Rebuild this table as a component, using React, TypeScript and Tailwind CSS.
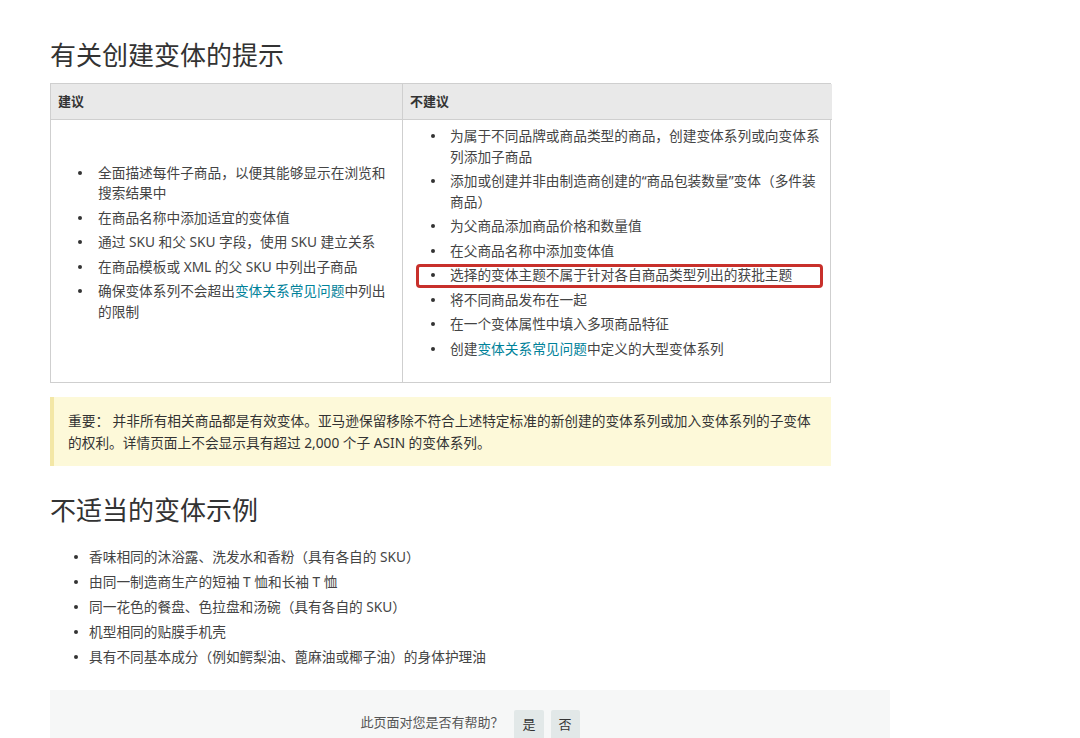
import React from "react";

const Link = ({ children }: { children: React.ReactNode }) => (
  <span className="text-[#00829a]">{children}</span>
);

function Item({
  children,
  indent,
  dot,
  mark,
}: {
  children: React.ReactNode;
  indent: string;
  dot: string;
  mark?: boolean;
}) {
  return (
    <li className={`relative ${indent} mt-[4px] first:mt-0`}>
      <span className={`absolute ${dot} top-[8px] h-[4px] w-[4px] rounded-full bg-[#333]`} />
      {mark && (
        <span className="pointer-events-none absolute left-[13px] top-[-1px] h-[24px] w-[407px] rounded-[4px] border-[3px] border-[#c8302b]" />
      )}
      {children}
    </li>
  );
}

export default function App() {
  const L = "pl-[47px]";
  const D = "left-[27px]";
  const R = "pl-[47px]";
  const RD = "left-[28px]";
  const B = "pl-[39px]";
  const BD = "left-[24px]";
  return (
    <div className="min-h-[738px] bg-white font-['Noto_Sans','Noto_Sans_CJK_SC',sans-serif] text-[13.7px] leading-[20.5px] text-[#444]">
      <div className="pl-[50px] pt-[38px]">
        <h1 className="text-[26px] font-normal leading-[34px] text-[#333]">有关创建变体的提示</h1>

        <div className="mt-[11px] grid w-[781px] grid-cols-[351px_430px] border border-[#cfcfcf]">
          <div className="flex h-[35px] items-center bg-[#e9e9e9] pl-[7px] font-bold text-[#333] text-[13px]">建议</div>
          <div className="flex h-[35px] items-center border-l border-[#cfcfcf] bg-[#e9e9e9] pl-[7px] font-bold text-[#333] text-[13px]">不建议</div>

          <div className="flex items-center border-t border-[#cfcfcf] pb-[23px] pt-[6px] pr-[14px]">
            <ul>
              <Item indent={L} dot={D}>全面描述每件子商品，以便其能够显示在浏览和搜索结果中</Item>
              <Item indent={L} dot={D}>在商品名称中添加适宜的变体值</Item>
              <Item indent={L} dot={D}>通过 SKU 和父 SKU 字段，使用 SKU 建立关系</Item>
              <Item indent={L} dot={D}>在商品模板或 XML 的父 SKU 中列出子商品</Item>
              <Item indent={L} dot={D}>
                确保变体系列不会超出<Link>变体关系常见问题</Link>中列出的限制
              </Item>
            </ul>
          </div>
          <div className="border-l border-t border-[#cfcfcf] pb-[23px] pt-[6px] pr-[10px]">
            <ul>
              <Item indent={R} dot={RD}>为属于不同品牌或商品类型的商品，创建变体系列或向变体系列添加子商品</Item>
              <Item indent={R} dot={RD}>添加或创建并非由制造商创建的“商品包装数量”变体（多件装商品）</Item>
              <Item indent={R} dot={RD}>为父商品添加商品价格和数量值</Item>
              <Item indent={R} dot={RD}>在父商品名称中添加变体值</Item>
              <Item indent={R} dot={RD} mark>选择的变体主题不属于针对各自商品类型列出的获批主题</Item>
              <Item indent={R} dot={RD}>将不同商品发布在一起</Item>
              <Item indent={R} dot={RD}>在一个变体属性中填入多项商品特征</Item>
              <Item indent={R} dot={RD}>
                创建<Link>变体关系常见问题</Link>中定义的大型变体系列
              </Item>
            </ul>
          </div>
        </div>

        <div className="mt-[14px] w-[781px] border-l-[4px] border-[#f3e7a6] bg-[#fdf9d9] pb-[12px] pl-[14px] pr-[12px] pt-[13px] leading-[22px] text-[#333]">
          重要： 并非所有相关商品都是有效变体。亚马逊保留移除不符合上述特定标准的新创建的变体系列或加入变体系列的子变体的权利。详情页面上不会显示具有超过 2,000 个子 ASIN 的变体系列。
        </div>

        <h2 className="mt-[27px] text-[26px] font-normal leading-[34px] text-[#333]">不适当的变体示例</h2>

        <ul className="mt-[20px] [&>li]:mt-[4.5px] [&>li:first-child]:mt-0">
          <Item indent={B} dot={BD}>香味相同的沐浴露、洗发水和香粉（具有各自的 SKU）</Item>
          <Item indent={B} dot={BD}>由同一制造商生产的短袖 T 恤和长袖 T 恤</Item>
          <Item indent={B} dot={BD}>同一花色的餐盘、色拉盘和汤碗（具有各自的 SKU）</Item>
          <Item indent={B} dot={BD}>机型相同的贴膜手机壳</Item>
          <Item indent={B} dot={BD}>具有不同基本成分（例如鳄梨油、蓖麻油或椰子油）的身体护理油</Item>
        </ul>

        <div className="mt-[22px] flex h-[60px] w-[840px] items-start justify-center bg-[#f6f7f7] pt-[20px] text-[13px]">
          <span className="mt-[2.5px] text-[#555]">此页面对您是否有帮助？</span>
          <span className="ml-[11px] flex h-[30px] items-center rounded-[2px] bg-[#e2e8e8] px-[8px] text-[#333]">是</span>
          <span className="ml-[7px] flex h-[30px] items-center rounded-[2px] bg-[#e2e8e8] px-[8px] text-[#333]">否</span>
        </div>
      </div>
    </div>
  );
}
